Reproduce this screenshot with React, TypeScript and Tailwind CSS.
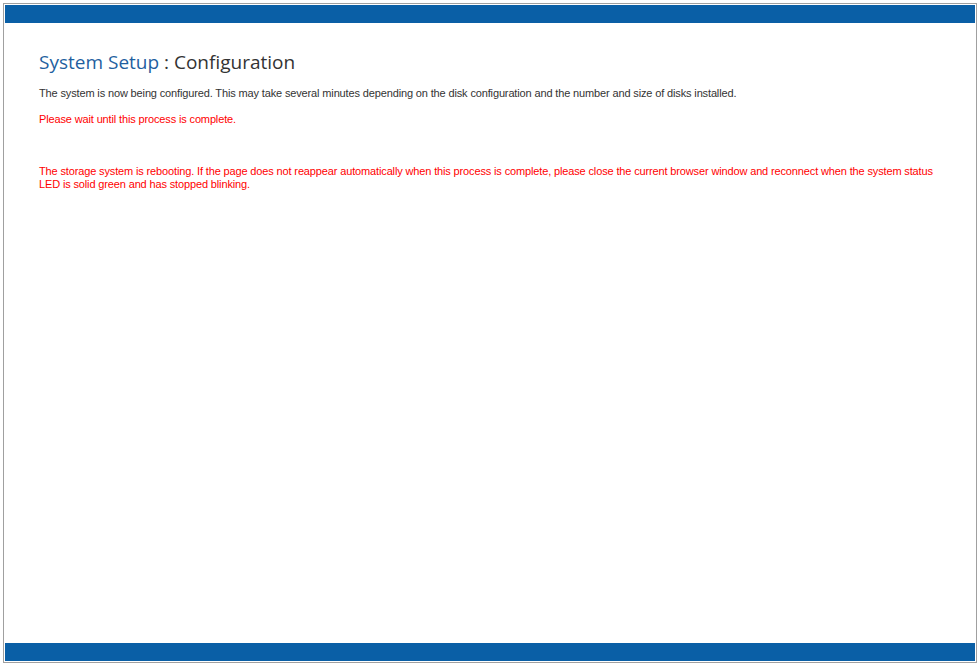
export default function App() {
  return (
    <div className="h-[666px] w-[980px] bg-white p-[3px]">
      <div className="flex h-[660px] flex-col border border-[#a0a0a0] p-px">
        <div className="h-[18px] bg-[#0a5fa6]" />
        <div className="flex-1 px-[34px] pt-[26px] font-['Liberation_Sans',sans-serif] text-[11px] tracking-[-0.14px] text-[#333]">
          <h1 className="font-['Open_Sans',sans-serif] text-[19px] leading-[26px] tracking-normal">
            <span className="text-[#1f5fa0]">System Setup</span>
            <span className="text-[#333]"> : Configuration</span>
          </h1>
          <p className="mt-[12px] leading-[13px]">
            The system is now being configured. This may take several minutes depending on the disk configuration and the number and size of disks installed.
          </p>
          <p className="mt-[13px] leading-[13px] text-[#ff0000]">Please wait until this process is complete.</p>
          <p className="mt-[39px] leading-[13px] text-[#ff0000]">
            The storage system is rebooting. If the page does not reappear automatically when this process is complete, please close the current browser window and reconnect when the system status LED is solid green and has stopped blinking.
          </p>
        </div>
        <div className="h-[18px] bg-[#0a5fa6]" />
      </div>
    </div>
  );
}
